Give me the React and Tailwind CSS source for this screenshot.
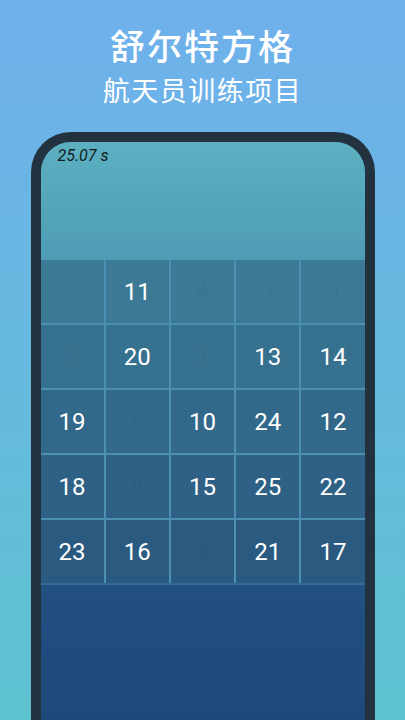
import React from "react";

const cells = [
  [2, 11, 4, 3, 9],
  [5, 20, 7, 13, 14],
  [19, 6, 10, 24, 12],
  [18, 8, 15, 25, 22],
  [23, 16, 1, 21, 17],
];

// numbers 1-9 are already tapped, they fade out
const found = 9;

const rowBg = [
  "bg-[#3b7994]",
  "bg-[#36718f]",
  "bg-[#32698a]",
  "bg-[#2e6185]",
  "bg-[#2a5a80]",
];

const App = () => {
  return (
    <div
      className="w-[405px] h-[720px] overflow-hidden bg-gradient-to-b from-[#6fb0ec] to-[#5dc2d0] flex flex-col items-center"
      style={{ fontFamily: '"Noto Sans", "Noto Sans CJK SC", sans-serif' }}
    >
      <h1 className="mt-[23px] text-[35px] leading-[47px] font-medium text-white tracking-[2px]">
        舒尔特方格
      </h1>
      <p className="mt-[1px] text-[27px] leading-[40px] text-white tracking-[1.5px]">
        航天员训练项目
      </p>

      <div className="mt-[21px] w-[344px] flex-1 rounded-t-[40px] border-[10px] border-b-0 border-[#23323f] overflow-hidden">
        <div className="h-full rounded-t-[30px] overflow-hidden flex flex-col bg-gradient-to-b from-[#2a6695] to-[#1e497b]">
          <div className="h-[118px] bg-gradient-to-b from-[#5cb0c1] to-[#4e9cb4] px-[17px] pt-[1px]">
            <span
              className="text-[16px] italic text-[#111c22]"
              style={{ fontFamily: 'Roboto, "Liberation Sans", sans-serif' }}
            >
              25.07 s
            </span>
          </div>
          <div
            className="grid grid-cols-5 gap-[2px] bg-[#4b90b1]"
            style={{ fontFamily: 'Roboto, "Noto Sans", sans-serif' }}
          >
            {cells.map((row, r) =>
              row.map((n) => (
                <div
                  key={n}
                  className={`h-[63px] flex items-center justify-center text-[24px] ${rowBg[r]} ${
                    n <= found ? "text-black/[0.04]" : "text-white"
                  }`}
                >
                  {n}
                </div>
              ))
            )}
          </div>
          <div className="h-[2px] bg-[#2f6c96]" />
        </div>
      </div>
    </div>
  );
};

export default App;
